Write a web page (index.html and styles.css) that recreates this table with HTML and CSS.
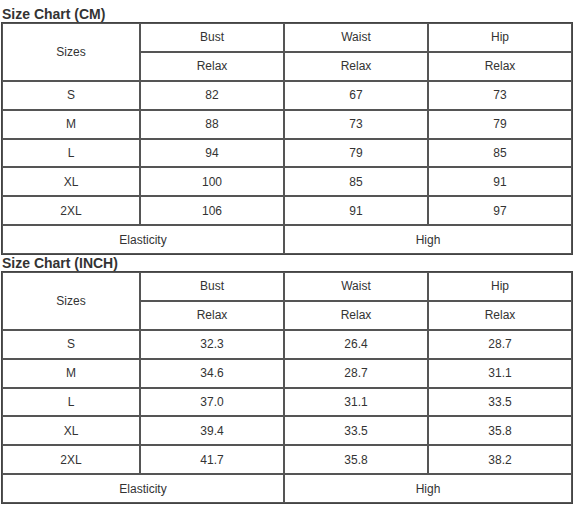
FILE: index.html
```html
<!DOCTYPE html>
<html>
<head>
<meta charset="utf-8">
<link rel="stylesheet" href="styles.css">
</head>
<body>
<div class="page">
  <h3 class="title">Size Chart (CM)</h3>
  <table class="chart">
    <colgroup><col class="c1"><col class="c2"><col class="c2"><col class="c2"></colgroup>
    <tr><td rowspan="2">Sizes</td><td>Bust</td><td>Waist</td><td>Hip</td></tr>
    <tr><td>Relax</td><td>Relax</td><td>Relax</td></tr>
    <tr><td>S</td><td>82</td><td>67</td><td>73</td></tr>
    <tr><td>M</td><td>88</td><td>73</td><td>79</td></tr>
    <tr><td>L</td><td>94</td><td>79</td><td>85</td></tr>
    <tr><td>XL</td><td>100</td><td>85</td><td>91</td></tr>
    <tr><td>2XL</td><td>106</td><td>91</td><td>97</td></tr>
    <tr><td colspan="2">Elasticity</td><td colspan="2">High</td></tr>
  </table>
  <h3 class="title">Size Chart (INCH)</h3>
  <table class="chart">
    <colgroup><col class="c1"><col class="c2"><col class="c2"><col class="c2"></colgroup>
    <tr><td rowspan="2">Sizes</td><td>Bust</td><td>Waist</td><td>Hip</td></tr>
    <tr><td>Relax</td><td>Relax</td><td>Relax</td></tr>
    <tr><td>S</td><td>32.3</td><td>26.4</td><td>28.7</td></tr>
    <tr><td>M</td><td>34.6</td><td>28.7</td><td>31.1</td></tr>
    <tr><td>L</td><td>37.0</td><td>31.1</td><td>33.5</td></tr>
    <tr><td>XL</td><td>39.4</td><td>33.5</td><td>35.8</td></tr>
    <tr><td>2XL</td><td>41.7</td><td>35.8</td><td>38.2</td></tr>
    <tr><td colspan="2">Elasticity</td><td colspan="2">High</td></tr>
  </table>
</div>
</body>
</html>
```
FILE: styles.css
```css
html, body {
  margin: 0;
  padding: 0;
  background: #fff;
}
.page {
  padding: 6px 0 0 1px;
  font-family: "Liberation Sans", Arial, sans-serif;
  color: #333;
}
.title {
  margin: 0;
  font-size: 14px;
  line-height: 16px;
  font-weight: bold;
  color: #333;
  padding-left: 1px;
}
.chart {
  border-collapse: separate;
  border-spacing: 0;
  border: 1px solid #444;
  width: 572px;
  table-layout: fixed;
}
.c1 { width: 138px; }
.c2 { width: 144px; }
.chart td {
  border: 1px solid #555;
  height: 26.875px;
  padding: 0;
  text-align: center;
  vertical-align: middle;
  font-size: 12px;
  line-height: 14px;
  color: #333;
}
```
